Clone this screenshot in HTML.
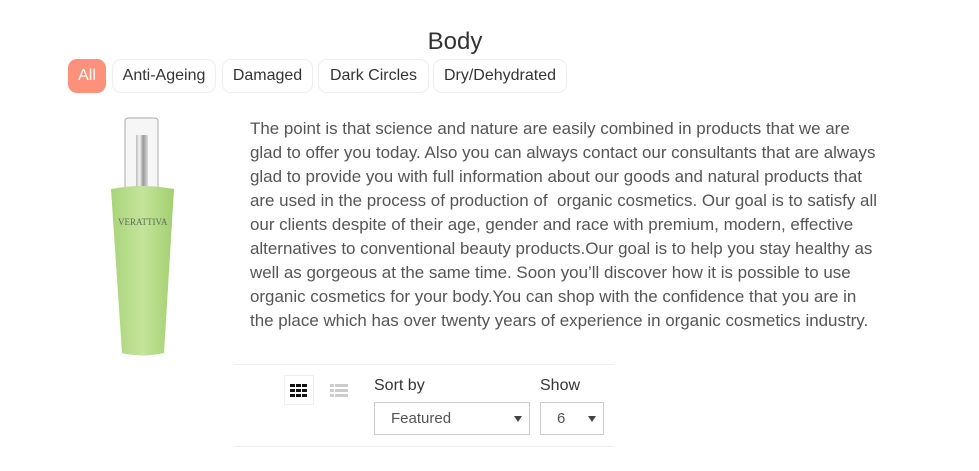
<!DOCTYPE html>
<html><head><meta charset="utf-8"><style>
*{box-sizing:border-box;margin:0;padding:0}
body{width:979px;height:471px;background:#fff;font-family:"Liberation Sans",Arial,sans-serif;color:#333;position:relative;overflow:hidden}
h1{position:absolute;top:28px;left:0;width:910px;text-align:center;font-weight:normal;font-size:24px;color:#333}
.tab{position:absolute;top:59px;height:34px;border:1px solid #eee;border-radius:9px;font-size:16px;line-height:32px;color:#333;background:#fff;text-align:center;white-space:nowrap}
.tab.a{background:#fd917c;border-color:#fd917c;color:#fff}
.txt{position:absolute;left:250px;top:117px;font-size:16.95px;line-height:24px;color:#555;white-space:nowrap}
.hr{position:absolute;left:234px;width:380px;height:1px;background:#eee}
.lbl{position:absolute;font-size:16px;color:#333}
.sel{position:absolute;height:33px;border:1px solid #ccc;font-size:15px;color:#555;line-height:31px;padding-left:16px}
.sel:after{content:"";position:absolute;right:7px;top:13px;border:4px solid transparent;border-top:6px solid #444;border-bottom:0}
</style></head><body>
<h1>Body</h1>
<div class="tab a" style="left:68px;width:38px">All</div>
<div class="tab" style="left:112px;width:104px">Anti-Ageing</div>
<div class="tab" style="left:222px;width:91px">Damaged</div>
<div class="tab" style="left:318px;width:111px">Dark Circles</div>
<div class="tab" style="left:433px;width:134px">Dry/Dehydrated</div>
<svg style="position:absolute;left:100px;top:115px" width="85" height="245">
<defs><linearGradient id="c" x1="0" x2="1"><stop offset="0" stop-color="#bbb"/><stop offset=".3" stop-color="#f4f4f4"/><stop offset=".6" stop-color="#999"/><stop offset="1" stop-color="#ddd"/></linearGradient>
<linearGradient id="g" x1="0" x2="1"><stop offset="0" stop-color="#a9d47a"/><stop offset=".5" stop-color="#c4e49a"/><stop offset="1" stop-color="#a2cf70"/></linearGradient></defs>
<rect x="25" y="3" width="33" height="75" rx="3" fill="#f6f6f6" stroke="#aaa"/>
<rect x="36" y="20" width="12" height="58" fill="url(#c)"/>
<path d="M11 74 Q42 68 74 74 L64 238 Q42 243 22 238 Z" fill="url(#g)"/>
<text x="18" y="110" font-size="9" fill="#5b6e55" font-family="Liberation Serif">VERATTIVA</text>
</svg>
<div class="txt">The point is that science and nature are easily combined in products that we are<br>glad to offer you today. Also you can always contact our consultants that are always<br>glad to provide you with full information about our goods and natural products that<br>are used in the process of production of&nbsp; organic cosmetics. Our goal is to satisfy all<br>our clients despite of their age, gender and race with premium, modern, effective<br>alternatives to conventional beauty products.Our goal is to help you stay healthy as<br>well as gorgeous at the same time. Soon you’ll discover how it is possible to use<br>organic cosmetics for your body.You can shop with the confidence that you are in<br>the place which has over twenty years of experience in organic cosmetics industry.</div>
<div class="hr" style="top:364px"></div>
<div class="hr" style="top:446px"></div>
<div style="position:absolute;left:284px;top:375px;width:30px;height:30px;border:1px solid #eee"></div>
<svg style="position:absolute;left:290px;top:384px" width="18" height="13"><g fill="#111"><rect x="0" y="0" width="5" height="3"/><rect x="6" y="0" width="5" height="3"/><rect x="12" y="0" width="5" height="3"/><rect x="0" y="5" width="5" height="3"/><rect x="6" y="5" width="5" height="3"/><rect x="12" y="5" width="5" height="3"/><rect x="0" y="10" width="5" height="3"/><rect x="6" y="10" width="5" height="3"/><rect x="12" y="10" width="5" height="3"/></g></svg>
<svg style="position:absolute;left:330px;top:384px" width="18" height="13"><g fill="#ccc"><rect x="0" y="0" width="4" height="3"/><rect x="5" y="0" width="13" height="3"/><rect x="0" y="5" width="4" height="3"/><rect x="5" y="5" width="13" height="3"/><rect x="0" y="10" width="4" height="3"/><rect x="5" y="10" width="13" height="3"/></g></svg>
<div class="lbl" style="left:374px;top:377px">Sort by</div>
<div class="lbl" style="left:540px;top:377px">Show</div>
<div class="sel" style="left:374px;top:402px;width:156px">Featured</div>
<div class="sel" style="left:540px;top:402px;width:64px">6</div>
</body></html>
